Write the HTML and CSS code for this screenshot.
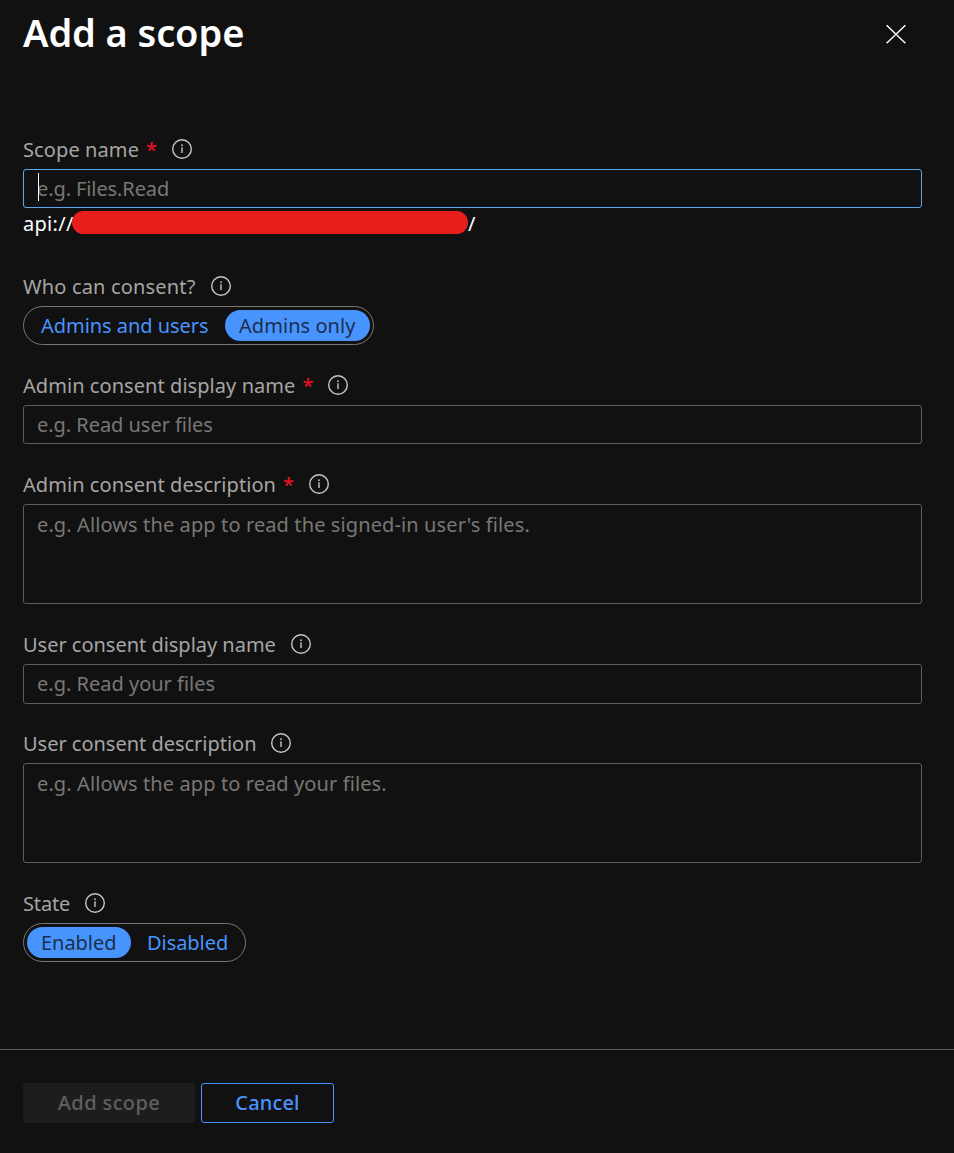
FILE: index.html
```html
<!DOCTYPE html>
<html lang="en">
<head>
<meta charset="utf-8">
<title>Add a scope</title>
<link rel="stylesheet" href="styles.css">
</head>
<body>
<svg class="defs" width="0" height="0" aria-hidden="true">
  <symbol id="info" viewBox="0 0 20 20">
    <circle cx="10" cy="10" r="9.3" fill="none" stroke="currentColor" stroke-width="1.4"/>
    <path d="M10 8.2v5.8" stroke="currentColor" stroke-width="1.4"/>
    <circle cx="10" cy="6.2" r=".9" fill="currentColor"/>
  </symbol>
</svg>
<main class="panel">
  <header class="panel-header">
    <h1 class="title">Add a scope</h1>
    <button class="close" aria-label="Close"><svg width="20" height="20" viewBox="0 0 20 20"><path d="M.6 1.3 19.4 19.3M19.4 1.3.6 19.3" stroke="#fff" stroke-width="1.4" fill="none"/></svg></button>
  </header>
  <form class="form">
    <section class="field field-scope">
      <div class="label"><span class="w-scope">Scope name</span><b class="req">*</b><svg class="info"><use href="#info"/></svg></div>
      <div class="focus-wrap"><input class="box box-focus p-scope" placeholder="e.g. Files.Read"><i class="caret"></i></div>
      <div class="uri"><span class="uri-text">api://</span><i class="redaction"></i><span>/</span></div>
    </section>
    <section class="field">
      <div class="label"><span class="w-who">Who can consent?</span><svg class="info"><use href="#info"/></svg></div>
      <div class="toggle toggle-who"><span class="opt opt-au">Admins and users</span><span class="opt opt-on opt-ao">Admins only</span></div>
    </section>
    <section class="field">
      <div class="label"><span class="w-adn">Admin consent display name</span><b class="req">*</b><svg class="info"><use href="#info"/></svg></div>
      <input class="box p-adn" placeholder="e.g. Read user files">
    </section>
    <section class="field field-tall">
      <div class="label"><span class="w-ad">Admin consent description</span><b class="req">*</b><svg class="info"><use href="#info"/></svg></div>
      <textarea class="box area p-ad" placeholder="e.g. Allows the app to read the signed-in user's files."></textarea>
    </section>
    <section class="field">
      <div class="label"><span class="w-udn">User consent display name</span><svg class="info"><use href="#info"/></svg></div>
      <input class="box box-40 p-udn" placeholder="e.g. Read your files">
    </section>
    <section class="field field-tall">
      <div class="label"><span class="w-ud">User consent description</span><svg class="info"><use href="#info"/></svg></div>
      <textarea class="box area p-ud" placeholder="e.g. Allows the app to read your files."></textarea>
    </section>
    <section class="field">
      <div class="label"><span class="w-state">State</span><svg class="info"><use href="#info"/></svg></div>
      <div class="toggle toggle-state"><span class="opt opt-on opt-en">Enabled</span><span class="opt opt-dis">Disabled</span></div>
    </section>
  </form>
  <footer class="footer">
    <button class="btn btn-add" disabled>Add scope</button>
    <button class="btn btn-cancel">Cancel</button>
  </footer>
</main>
</body>
</html>
```
FILE: styles.css
```css
* { box-sizing: border-box; }
body { margin: 0; background: #111; color: #fff; font: 20px/28px "Noto Sans", "Open Sans", sans-serif; }
.defs { display: block; }
.panel { display: flex; flex-direction: column; width: 954px; height: 1153px; }
.panel-header { display: flex; justify-content: space-between; align-items: center; height: 68px; padding: 0 48px 0 23px; }
.title { margin: 0; padding-bottom: 4px; font-size: 38px; font-weight: 600; line-height: 52px; letter-spacing: -.1px; }
.close { display: flex; padding: 0; border: 0; background: none; }
.form { flex: 1; padding: 62px 32px 0 23px; }
.field { height: 99px; }
.field-scope { height: 137px; }
.field-tall { height: 160px; }
.label { display: flex; align-items: center; height: 39px; color: #a6a5a4; white-space: nowrap; }
.label > span { flex: none; }
.w-scope { letter-spacing: .1px; }
.w-who { letter-spacing: .17px; }
.w-adn { letter-spacing: .06px; }
.w-ad { letter-spacing: .06px; }
.w-udn, .w-ud { letter-spacing: -.02px; }
.w-state { letter-spacing: -.15px; }
.req { width: 10px; margin-left: 7px; color: #e81123; font-weight: 500; }
.info { flex: none; width: 20px; height: 20px; margin: 0 0 1px 15px; color: #c8c6c4; overflow: visible; }
.req + .info { margin-left: 16px; }
.focus-wrap { position: relative; }
.caret { position: absolute; left: 15px; top: 4px; width: 1px; height: 28px; background: #fff; }
.box { display: block; width: 899px; height: 39px; margin: 0; padding: 0 13px; border: 1px solid #605e5c; border-radius: 3px; background: #111; color: #fff; font: inherit; outline: 0; resize: none; }
.box::placeholder { color: #797775; opacity: 1; }
.box-40 { height: 40px; padding-bottom: 2px; }
.box-focus { border-color: #5aa9ee; }
.area { height: 100px; padding: 6px 13px; }
.p-scope { letter-spacing: -.1px; }
.p-adn { letter-spacing: -.04px; }
.p-ad { letter-spacing: .11px; }
.p-ud { letter-spacing: .1px; }
.uri { display: flex; align-items: center; height: 32px; }
.uri-text { width: 49px; letter-spacing: .3px; }
.redaction { width: 396px; height: 23px; margin: -3px 0 0; border-radius: 12px; background: #e81e1d; }
.toggle { display: flex; align-items: center; height: 39px; padding: 0 3px; border: 1px solid #797775; border-radius: 20px; color: #4894fe; white-space: nowrap; }
.toggle-who { width: 351px; }
.toggle-state { width: 223px; }
.opt { display: flex; align-items: center; height: 31px; border-radius: 16px; }
.opt-on { background: #4894fe; color: #1b2f4c; }
.opt-au { width: 198px; padding-left: 14px; letter-spacing: -.04px; }
.opt-ao { width: 145px; padding-left: 14px; letter-spacing: .05px; }
.opt-en { width: 104px; padding-left: 14px; letter-spacing: -.05px; }
.opt-dis { padding-left: 16px; letter-spacing: -.05px; }
.footer { display: flex; gap: 6px; height: 104px; padding: 33px 23px 0; border-top: 1px solid #605e5c; }
.btn { height: 40px; padding: 0; border: 1px solid #4894fe; border-radius: 3px; background: #111; color: #4894fe; font: 500 20px/28px "Noto Sans", sans-serif; }
.btn-add { width: 172px; border-color: #1d1d1d; background: #1d1d1d; color: #5f5f5f; letter-spacing: .4px; }
.btn-cancel { width: 133px; letter-spacing: .15px; }
```
